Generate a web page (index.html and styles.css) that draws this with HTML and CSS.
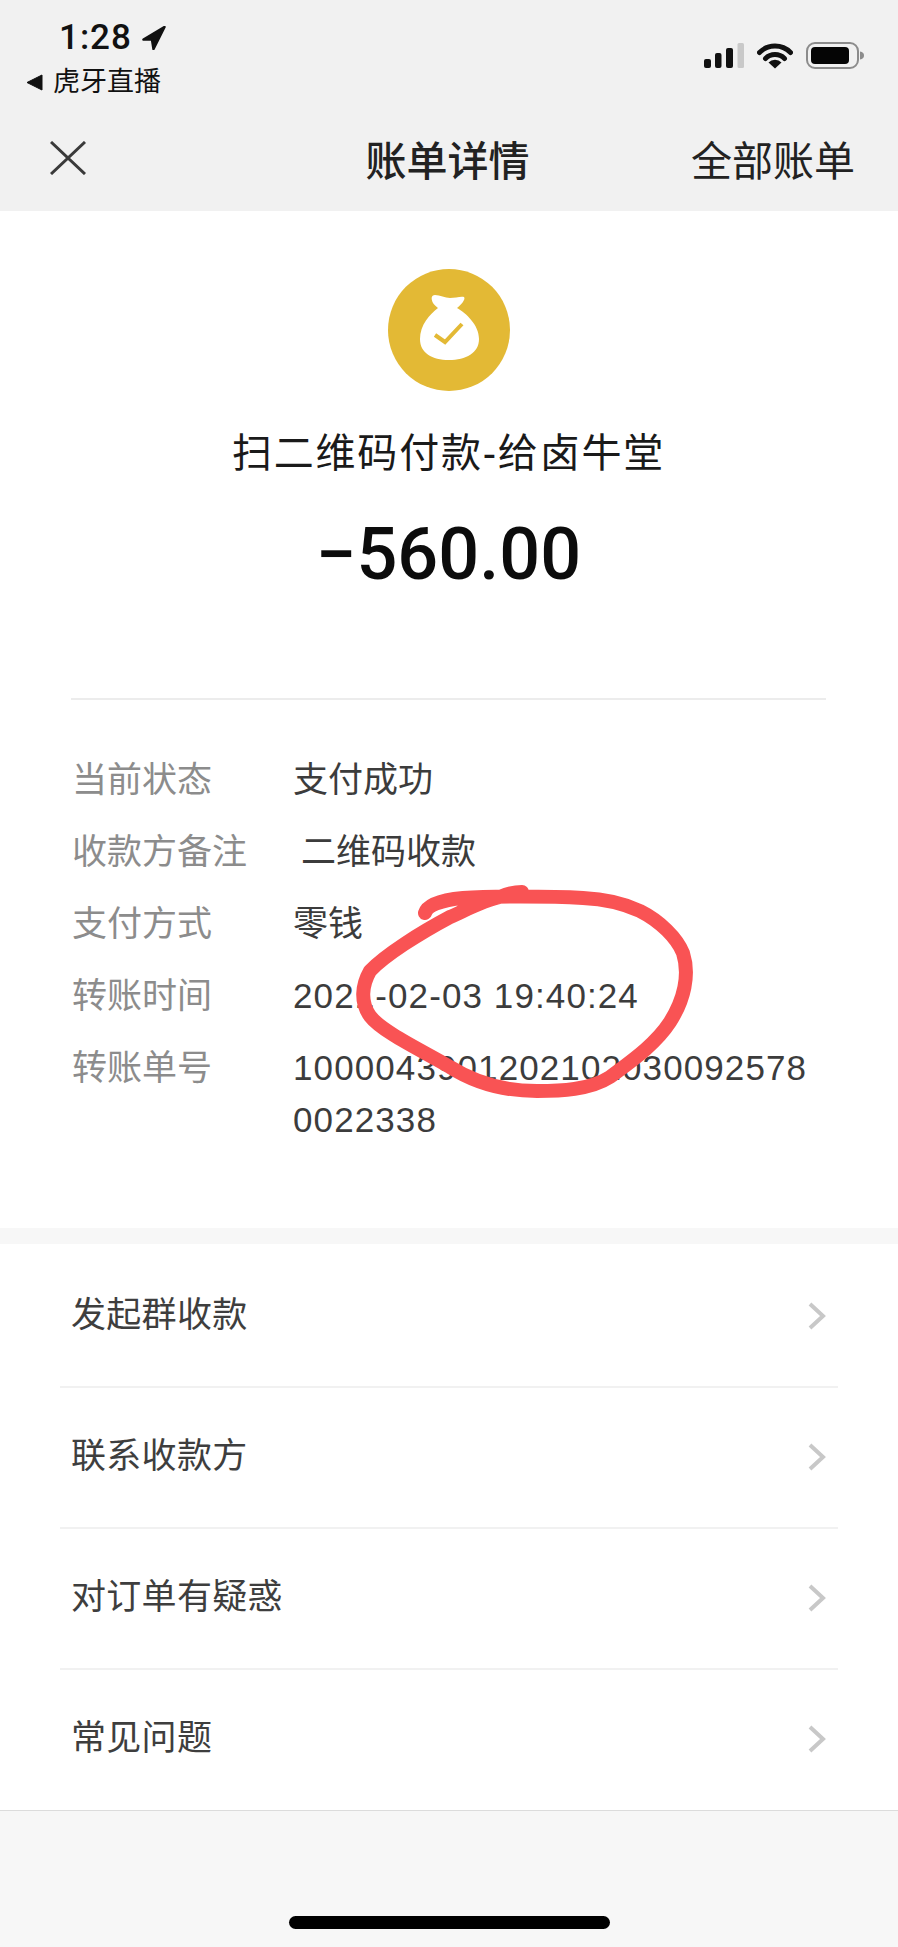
FILE: index.html
```html
<!DOCTYPE html>
<html lang="zh-CN">

<head>
    <meta charset="UTF-8">
    <meta name="viewport" content="width=device-width, initial-scale=1.0">
    <title>账单详情</title>
    <link rel="stylesheet" href="styles.css">
</head>

<body>
    <div class="page">
        <header class="topbar">
            <div class="status">
                <div class="status-left">
                    <div class="clock">
                        <span>1:28</span>
                        <svg class="locate" viewBox="0 0 24 24" width="24" height="24">
                            <path d="M22.5 1 1.5 13.500 10 13.500 11.500 23Z" fill="#111" stroke="#111" stroke-width="2.500" stroke-linejoin="round" />
                        </svg>
                    </div>
                    <div class="back-app">
                        <svg viewBox="0 0 17 17" width="17" height="17">
                            <path d="M1 8.5 16 1V16Z" fill="#111" stroke="#111" stroke-linejoin="round" />
                        </svg>
                        <span>虎牙直播</span>
                    </div>
                </div>
                <div class="status-right">
                    <svg viewBox="0 0 40 25" width="40" height="25">
                        <rect x="0" y="16" width="7" height="9" rx="2" fill="#111" />
                        <rect x="11" y="10" width="6.500" height="15" rx="2" fill="#111" />
                        <rect x="22" y="5" width="7" height="20" rx="2" fill="#111" />
                        <rect x="33.500" y="0" width="6.500" height="25" rx="1.500" fill="#c9c9c9" />
                    </svg>
                    <svg viewBox="0 0 36 26" width="36" height="26">
                        <path d="M2.500 9.500A22 22 0 0 1 33.500 9.500M8.500 15.500A13.500 13.500 0 0 1 27.500 15.500" fill="none" stroke="#111" stroke-width="5" stroke-linecap="round" />
                        <path d="M18 25.500 11.500 19.500A9 9 0 0 1 24.500 19.500Z" fill="#111" />
                    </svg>
                    <svg viewBox="0 0 58 27" width="58" height="27">
                        <rect x="1" y="1" width="51" height="25" rx="8" fill="none" stroke="#8c8c8c" stroke-width="2" />
                        <rect x="5" y="5" width="38" height="17" rx="4" fill="#050505" />
                        <path d="M54 9.500C57 10 58 11.500 58 13.500C58 15.500 57 17 54 17.500Z" fill="#8c8c8c" />
                    </svg>
                </div>
            </div>
            <nav class="nav">
                <svg class="close" viewBox="0 0 36 34" width="36" height="34">
                    <path d="M1 1 35 33M35 1 1 33" fill="none" stroke="#3a3a3a" stroke-width="3" />
                </svg>
                <h1 class="nav-title">账单详情</h1>
                <a class="nav-link">全部账单</a>
            </nav>
        </header>

        <section class="summary">
            <svg class="bag" viewBox="0 0 122 122" width="122" height="122">
                <circle cx="61" cy="61" r="61" fill="#e3b935" />
                <path d="M45 34C43 30 43 26 47 26C52 26 57 29 62 29C67 29 73 27 76 28C78 30 73 36 69 39C78 44 91 56 91 70C91 84 78 91 61 91C44 91 32 84 32 70C32 56 42 45 50 39C48 37 46 36 45 34Z" fill="#fff" />
                <path d="M47 66 57 73 74 55" fill="none" stroke="#e3b935" stroke-width="4" />
            </svg>
            <div class="pay-title">扫二维码付款-给卤牛堂</div>
            <div class="amount">−560.00</div>
        </section>

        <section class="details">
            <div class="detail-row">
                <span class="detail-label">当前状态</span>
                <span class="detail-value">支付成功</span>
            </div>
            <div class="detail-row">
                <span class="detail-label">收款方备注</span>
                <span class="detail-value detail-note">二维码收款</span>
            </div>
            <div class="detail-row">
                <span class="detail-label">支付方式</span>
                <span class="detail-value">零钱</span>
            </div>
            <div class="detail-row">
                <span class="detail-label">转账时间</span>
                <span class="detail-value detail-number">2021-02-03 19:40:24</span>
            </div>
            <div class="detail-row">
                <span class="detail-label">转账单号</span>
                <span class="detail-value detail-number">10000439012021020300925780022338</span>
            </div>
        </section>

        <div class="band"></div>

        <ul class="menu">
            <li class="menu-item">
                <span>发起群收款</span>
                <svg viewBox="0 0 19 28" width="19" height="28"><path d="M3 2 16 14 3 26" fill="none" stroke="#c8c8c8" stroke-width="4" /></svg>
            </li>
            <li class="menu-item">
                <span>联系收款方</span>
                <svg viewBox="0 0 19 28" width="19" height="28"><path d="M3 2 16 14 3 26" fill="none" stroke="#c8c8c8" stroke-width="4" /></svg>
            </li>
            <li class="menu-item">
                <span>对订单有疑惑</span>
                <svg viewBox="0 0 19 28" width="19" height="28"><path d="M3 2 16 14 3 26" fill="none" stroke="#c8c8c8" stroke-width="4" /></svg>
            </li>
            <li class="menu-item">
                <span>常见问题</span>
                <svg viewBox="0 0 19 28" width="19" height="28"><path d="M3 2 16 14 3 26" fill="none" stroke="#c8c8c8" stroke-width="4" /></svg>
            </li>
        </ul>

        <footer class="bottom">
            <div class="home-bar"></div>
        </footer>

        <!-- 手写红圈 -->
        <svg class="scribble" viewBox="0 0 898 1947" width="898" height="1947">
            <path d="M425 913C427 906 440 900 463 898C490 896 550 896 583 898C605 899 625 904 640 911C660 921 677 938 683 953C690 975 684 1000 670 1022C655 1045 630 1062 610 1077C590 1090 560 1091 537 1091C510 1091 480 1086 450 1067C425 1052 382 1032 370 1016C360 1002 362 985 370 971C385 955 420 933 450 917C468 909 485 900 500 897C507 894 515 892 522 892" fill="none" stroke="#f95354" stroke-width="14" stroke-linecap="round" stroke-linejoin="round" />
        </svg>
    </div>
</body>

</html>
```

FILE: styles.css
```css
body {
    margin: 0;
    padding: 0;
    background: #fff;
    font-family: "Liberation Sans", "Noto Sans CJK SC", sans-serif;
    color: #333;
}

.page {
    position: relative;
    display: flex;
    flex-direction: column;
    width: 898px;
    height: 1947px;
    overflow: hidden;
}

/* top grey area */
.topbar {
    flex: none;
    height: 211px;
    background: #f1f1f1;
}

.status {
    display: flex;
    justify-content: space-between;
    align-items: flex-start;
    box-sizing: border-box;
    height: 112px;
    padding: 17px 34px 0 26px;
}

.clock {
    display: flex;
    align-items: center;
    gap: 10px;
    margin-left: 33px;
    font: 500 35px/41px Roboto, sans-serif;
    letter-spacing: 1px;
    color: #111;
}

.back-app {
    display: flex;
    align-items: center;
    gap: 10px;
    margin-top: 7px;
    font-size: 27px;
    line-height: 34px;
    color: #111;
}

.status-right {
    display: flex;
    align-items: center;
    gap: 13px;
    margin-top: 25px;
}

.nav {
    display: grid;
    grid-template-columns: 1fr auto 1fr;
    align-items: center;
    height: 92px;
    padding: 0 43px 0 50px;
}

.nav-title {
    margin: 0 10px 0 0;
    font-size: 41px;
    font-weight: 500;
    color: #222;
}

.nav-link {
    justify-self: end;
    font-size: 41px;
    color: #222;
}

/* icon, title and amount */
.summary {
    display: flex;
    flex-direction: column;
    align-items: center;
    flex: none;
    box-sizing: border-box;
    margin: 0 72px 0 71px;
    height: 489px;
    padding-top: 58px;
    border-bottom: 2px solid #ececec;
}

.pay-title {
    margin-top: 34px;
    font-size: 40px;
    line-height: 56px;
    letter-spacing: 1.8px;
    color: #1a1a1a;
}

.amount {
    margin-top: 34px;
    font: 500 72px/80px Roboto, sans-serif;
    color: #0c0c0c;
}

.details {
    display: flex;
    flex-direction: column;
    gap: 20px;
    flex: none;
    padding: 54px 90px 82px 72px;
    font-size: 35px;
    line-height: 52px;
}

.detail-row {
    display: grid;
    grid-template-columns: 221px 1fr;
}

.detail-label {
    color: #8c8c8c;
    white-space: nowrap;
}

.detail-value {
    color: #3c3c3c;
    word-break: break-all;
}

.detail-number {
    letter-spacing: 1.1px;
}

.detail-note {
    margin-left: 8px;
}

.band {
    flex: none;
    height: 16px;
    background: #f7f7f7;
}

/* list of links */
.menu {
    flex: none;
    margin: 0;
    padding: 3px 0 0;
    list-style: none;
}

.menu-item {
    display: flex;
    justify-content: space-between;
    align-items: center;
    box-sizing: border-box;
    height: 141px;
    margin: 0 60px;
    padding: 0 12px 0 11px;
    border-bottom: 2px solid #f1f1f1;
    font-size: 35px;
    letter-spacing: 0.3px;
    color: #3e3e3e;
}

.menu-item span {
    margin-bottom: 11px;
}

.menu-item svg {
    margin-bottom: 2px;
}

.menu-item:last-child {
    height: 140px;
    border-bottom: none;
}

.bottom {
    flex: 1;
    border-top: 1px solid #dcdcdc;
    background: #f7f7f7;
}

.home-bar {
    width: 321px;
    height: 13px;
    margin: 105px 0 0 289px;
    border-radius: 7px;
    background: #000;
}

.scribble {
    position: absolute;
    top: 0;
    left: 0;
    pointer-events: none;
}
```
